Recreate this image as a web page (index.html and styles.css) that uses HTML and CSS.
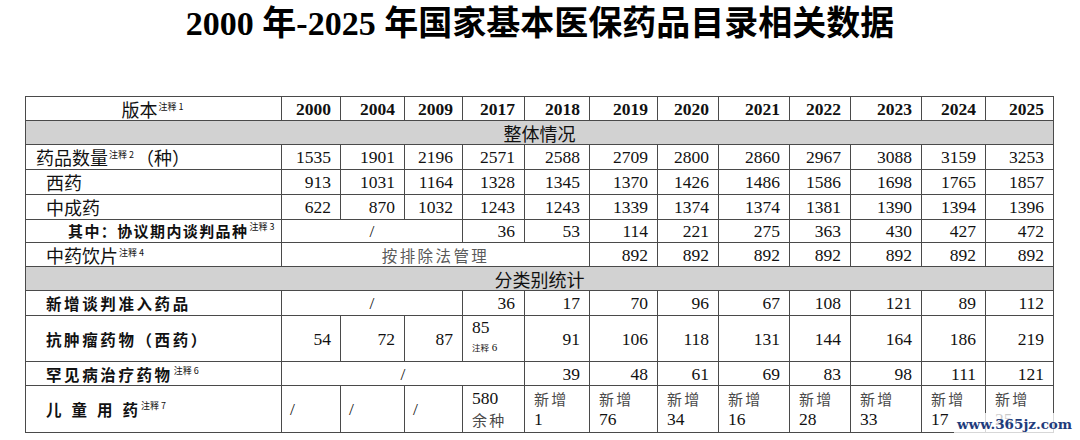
FILE: index.html
```html
<!DOCTYPE html>
<html lang="zh-CN">
<head>
<meta charset="utf-8">
<title>2000年-2025年国家基本医保药品目录相关数据</title>
<link rel="stylesheet" href="styles.css">
</head>
<body>
<div class="page">
  <h1 class="title"><span class="tnum">2000</span> 年<span class="tnum">-2025</span> 年国家基本医保药品目录相关数据</h1>
  <table class="data">
    <colgroup>
      <col class="c0"><col class="c1"><col class="c2"><col class="c3"><col class="c4"><col class="c5"><col class="c6"><col class="c7"><col class="c8"><col class="c9"><col class="c10"><col class="c11"><col class="c12">
    </colgroup>
    <tr class="r-head">
      <th class="head-lbl">版本<span class="note">注释 1</span></th>
      <th class="num">2000</th><th class="num">2004</th><th class="num">2009</th><th class="num">2017</th><th class="num">2018</th><th class="num">2019</th><th class="num">2020</th><th class="num">2021</th><th class="num">2022</th><th class="num">2023</th><th class="num">2024</th><th class="num">2025</th>
    </tr>
    <tr class="r-sec"><td class="sec" colspan="13">整体情况</td></tr>
    <tr class="r25">
      <td class="lbl">药品数量<span class="note">注释 2</span>（种）</td>
      <td class="num">1535</td><td class="num">1901</td><td class="num">2196</td><td class="num">2571</td><td class="num">2588</td><td class="num">2709</td><td class="num">2800</td><td class="num">2860</td><td class="num">2967</td><td class="num">3088</td><td class="num">3159</td><td class="num">3253</td>
    </tr>
    <tr class="r25">
      <td class="lbl ind">西药</td>
      <td class="num">913</td><td class="num">1031</td><td class="num">1164</td><td class="num">1328</td><td class="num">1345</td><td class="num">1370</td><td class="num">1426</td><td class="num">1486</td><td class="num">1586</td><td class="num">1698</td><td class="num">1765</td><td class="num">1857</td>
    </tr>
    <tr class="r25">
      <td class="lbl ind">中成药</td>
      <td class="num">622</td><td class="num">870</td><td class="num">1032</td><td class="num">1243</td><td class="num">1243</td><td class="num">1339</td><td class="num">1374</td><td class="num">1374</td><td class="num">1381</td><td class="num">1390</td><td class="num">1394</td><td class="num">1396</td>
    </tr>
    <tr class="r23">
      <td class="lbl sub">其中：协议期内谈判品种<span class="note">注释 3</span></td>
      <td class="slash" colspan="3">/</td>
      <td class="num">36</td><td class="num">53</td><td class="num">114</td><td class="num">221</td><td class="num">275</td><td class="num">363</td><td class="num">430</td><td class="num">427</td><td class="num">472</td>
    </tr>
    <tr class="r24">
      <td class="lbl ind">中药饮片<span class="note">注释 4</span></td>
      <td class="rule" colspan="5">按排除法管理</td>
      <td class="num">892</td><td class="num">892</td><td class="num">892</td><td class="num">892</td><td class="num">892</td><td class="num">892</td><td class="num">892</td>
    </tr>
    <tr class="r-sec"><td class="sec" colspan="13">分类别统计</td></tr>
    <tr class="r25">
      <td class="lbl cat">新增谈判准入药品</td>
      <td class="slash" colspan="3">/</td>
      <td class="num">36</td><td class="num">17</td><td class="num">70</td><td class="num">96</td><td class="num">67</td><td class="num">108</td><td class="num">121</td><td class="num">89</td><td class="num">112</td>
    </tr>
    <tr class="r46">
      <td class="lbl cat">抗肿瘤药物（西药）</td>
      <td class="num">54</td><td class="num">72</td><td class="num">87</td>
      <td class="stack top"><span class="line">85</span><span class="line small-note"><span class="nk">注释</span> 6</span></td>
      <td class="num">91</td><td class="num">106</td><td class="num">118</td><td class="num">131</td><td class="num">144</td><td class="num">164</td><td class="num">186</td><td class="num">219</td>
    </tr>
    <tr class="r24">
      <td class="lbl cat">罕见病治疗药物<span class="note">注释 6</span></td>
      <td class="slash" colspan="4">/</td>
      <td class="num">39</td><td class="num">48</td><td class="num">61</td><td class="num">69</td><td class="num">83</td><td class="num">98</td><td class="num">111</td><td class="num">121</td>
    </tr>
    <tr class="r47">
      <td class="lbl cat tight"><span class="spread">儿童用</span>药<span class="note">注释 7</span></td>
      <td class="left">/</td><td class="left">/</td><td class="left">/</td>
      <td class="stack"><span class="line">580</span><span class="line cjk">余种</span></td>
      <td class="stack"><span class="line cjk">新增</span><span class="line">1</span></td>
      <td class="stack"><span class="line cjk">新增</span><span class="line">76</span></td>
      <td class="stack"><span class="line cjk">新增</span><span class="line">34</span></td>
      <td class="stack"><span class="line cjk">新增</span><span class="line">16</span></td>
      <td class="stack"><span class="line cjk">新增</span><span class="line">28</span></td>
      <td class="stack"><span class="line cjk">新增</span><span class="line">33</span></td>
      <td class="stack"><span class="line cjk">新增</span><span class="line">17</span></td>
      <td class="stack"><span class="line cjk">新增</span><span class="line">25</span></td>
    </tr>
  </table>
  <div class="watermark">www.365jz.com</div>
</div>
</body>
</html>
```

FILE: styles.css
```css
html, body {
  margin: 0;
  padding: 0;
  background: #ffffff;
}

.page {
  position: relative;
  width: 1080px;
  height: 440px;
  overflow: hidden;
  font-family: "Liberation Serif", "Noto Sans CJK SC", serif;
  color: #111;
}

.title {
  margin: 0;
  padding-top: 4px;
  height: 40px;
  line-height: 40px;
  font-size: 34px;
  font-weight: bold;
  text-align: center;
  color: #000;
  font-family: "Liberation Serif", "Noto Sans CJK SC", serif;
  letter-spacing: 0;
}

.tnum {
  font-family: "Liberation Serif", serif;
}

.data {
  margin: 52px 0 0 25px;
  border-collapse: collapse;
  table-layout: fixed;
  width: 1029px;
}

.c0 { width: 256px; }
.c1 { width: 59px; }
.c2 { width: 64px; }
.c3 { width: 58px; }
.c4 { width: 62px; }
.c5 { width: 65px; }
.c6 { width: 68px; }
.c7 { width: 61px; }
.c8 { width: 71px; }
.c9 { width: 61px; }
.c10 { width: 71px; }
.c11 { width: 64px; }
.c12 { width: 68px; }

.data th,
.data td {
  border: 1px solid #4a4a4a;
  padding: 0;
  font-size: 17.5px;
  line-height: 20px;
  vertical-align: middle;
  white-space: nowrap;
  overflow: visible;
}

.data th {
  font-weight: bold;
}

.r-head { height: 24px; }
.r-sec { height: 24px; }
.r23 { height: 23px; }
.r24 { height: 24px; }
.r25 { height: 25px; }
.r46 { height: 46px; }
.r47 { height: 47px; }

.head-lbl {
  text-align: center;
  font-family: "Noto Sans CJK SC", sans-serif;
  font-size: 18px !important;
}

.data th.head-lbl {
  font-weight: normal;
}

.num {
  text-align: right;
  padding-right: 9px !important;
}

.sec {
  background: #d2d2d2;
  text-align: center;
  font-family: "Noto Sans CJK SC", sans-serif;
  font-size: 18px !important;
  color: #111;
}

.lbl {
  text-align: left;
  padding-left: 10px !important;
  font-family: "Noto Sans CJK SC", sans-serif;
  font-size: 18px !important;
  color: #111;
}

.lbl.ind {
  padding-left: 20px !important;
}

.lbl.sub {
  padding-left: 42px !important;
  font-size: 15px !important;
  font-weight: bold;
  letter-spacing: 1.4px;
}

.lbl.cat {
  padding-left: 20px !important;
  font-size: 15.5px !important;
  font-weight: bold;
  letter-spacing: 2.6px;
}

.lbl.cat.tight {
  letter-spacing: 0;
}

.spread {
  letter-spacing: 10px;
}

.note {
  font-family: "Noto Sans CJK SC", sans-serif;
  font-size: 9px;
  font-weight: normal;
  letter-spacing: 0;
  line-height: 0;
  vertical-align: 7px;
  margin-left: 1px;
  margin-right: 2px;
}

.lbl.cat.tight .note {
  margin-left: 3px;
}

.slash {
  text-align: center;
}

.left {
  text-align: left;
  padding-left: 8px !important;
}

.rule {
  text-align: center;
  font-family: "Noto Sans CJK SC", sans-serif;
  font-size: 15.5px !important;
  letter-spacing: 2.4px;
  color: #5a5a5a;
}

.stack {
  text-align: left;
  padding-left: 9px !important;
}

.stack.top {
  vertical-align: top;
  padding-top: 1px !important;
}

.line {
  display: block;
  line-height: 21.5px;
}

.line.cjk {
  font-family: "Noto Sans CJK SC", sans-serif;
  font-size: 15px;
  letter-spacing: 2.2px;
  color: #4a4a4a;
}

.line.small-note {
  line-height: 16px;
  font-size: 11px;
}

.nk {
  font-family: "Noto Sans CJK SC", sans-serif;
  font-size: 8.5px;
}

.watermark {
  position: absolute;
  left: 954px;
  top: 413px;
  width: 124px;
  height: 22px;
  line-height: 22px;
  background: rgba(255, 255, 255, 0.78);
  font-family: "DejaVu Serif", serif;
  font-weight: bold;
  font-size: 13.5px;
  color: #1f3c7c;
  text-align: left;
  padding-left: 3px;
  box-sizing: border-box;
  letter-spacing: 0;
  white-space: nowrap;
}
```
